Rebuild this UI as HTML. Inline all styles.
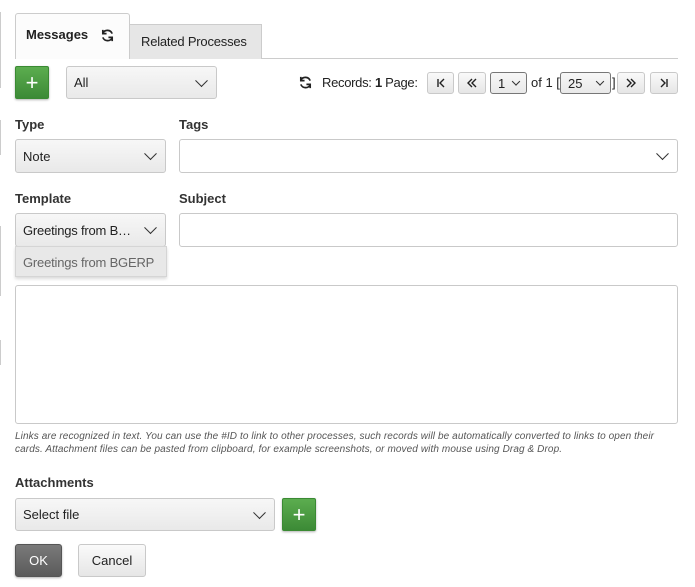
<!DOCTYPE html>
<html><head><style>
*{box-sizing:border-box}
body{margin:0;width:695px;height:587px;background:#fff;font-family:"Liberation Sans",Arial,sans-serif;font-size:13px;color:#222;position:relative;overflow:hidden}
.a{position:absolute;white-space:nowrap}
.sel{position:absolute;border:1px solid #c9c9c9;border-radius:3px;background:linear-gradient(#f7f7f7,#e9e9e9);padding-left:7px;display:flex;align-items:center;font-size:13px;white-space:nowrap}
.chev{position:absolute;right:10px;top:50%;width:9px;height:9px;border-right:1.5px solid #333;border-bottom:1.5px solid #333;transform:translateY(-75%) rotate(45deg)}
.inp{position:absolute;border:1px solid #c9c9c9;border-radius:3px;background:#fff}
.lbl{position:absolute;font-weight:bold;font-size:13px;color:#333}
.btn{position:absolute;border:1px solid #c9c9c9;border-radius:3px;background:linear-gradient(#fafafa,#e6e6e6);display:flex;align-items:center;justify-content:center;font-size:12px}
.plus{position:absolute;background:linear-gradient(#5cad4f,#3c8a36);border:1px solid #3a8a33;border-radius:2px;color:#fff;font-size:22px;display:flex;align-items:center;justify-content:center;box-shadow:0 1px 2px rgba(0,0,0,.3)}
</style></head><body>
<div class="a" style="left:0;top:12px;width:1px;height:76px;background:#ccc"></div>
<div class="a" style="left:0;top:120px;width:1px;height:35px;background:#ccc"></div>
<div class="a" style="left:0;top:226px;width:1px;height:70px;background:#ccc"></div>
<div class="a" style="left:0;top:340px;width:1px;height:25px;background:#ccc"></div>
<div class="a" style="left:15px;top:58px;width:663px;height:1px;background:#ccc"></div>
<div class="a" style="left:15px;top:13px;width:115px;height:46px;border:1px solid #ccc;border-bottom:none;border-radius:3px 3px 0 0;background:#fcfcfc"></div>
<div class="a" style="left:26px;top:27px;font-weight:bold;font-size:13px">Messages</div>
<svg class="a" style="left:100px;top:28px" width="15" height="15" viewBox="0 0 16 16" fill="none" stroke="#222" stroke-width="1.8"><path d="M13 6A5.5 5.5 0 0 0 3 5.5M3 10a5.5 5.5 0 0 0 10 .5"/><path d="M3 2v4h4M13 14v-4H9" /></svg>
<div class="a" style="left:129px;top:24px;width:133px;height:35px;border:1px solid #ccc;border-bottom:none;background:#e6e6e6"></div>
<div class="a" style="left:141px;top:34px;font-size:13px;letter-spacing:-0.2px">Related Processes</div>
<div class="plus" style="left:15px;top:66px;width:34px;height:33px">+</div>
<div class="sel" style="left:66px;top:66px;width:151px;height:33px">All<span class="chev"></span></div>
<svg class="a" style="left:298px;top:75px" width="15" height="15" viewBox="0 0 16 16" fill="none" stroke="#222" stroke-width="1.8"><path d="M13 6A5.5 5.5 0 0 0 3 5.5M3 10a5.5 5.5 0 0 0 10 .5"/><path d="M3 2v4h4M13 14v-4H9"/></svg>
<div class="a" style="left:322px;top:75px;font-size:13px;letter-spacing:-0.3px">Records: <b>1</b> Page:</div>
<div class="btn" style="left:427px;top:72px;width:27px;height:22px"><svg width="10" height="10" viewBox="0 0 10 10" fill="none" stroke="#222" stroke-width="1.4"><path d="M2 1v8M8 1L4 5l4 4"/></svg></div>
<div class="btn" style="left:458px;top:72px;width:28px;height:22px"><svg width="10" height="10" viewBox="0 0 10 10" fill="none" stroke="#222" stroke-width="1.4"><path d="M5 1L1 5l4 4M9 1L5 5l4 4"/></svg></div>
<div class="sel" style="left:490px;top:72px;width:37px;height:22px;border-color:#777">1<span class="chev" style="right:7px;width:6px;height:6px"></span></div>
<div class="a" style="left:531px;top:75px">of 1 [</div>
<div class="sel" style="left:560px;top:72px;width:51px;height:22px;border-color:#777">25<span class="chev" style="right:7px;width:6px;height:6px"></span></div>
<div class="a" style="left:612px;top:75px">]</div>
<div class="btn" style="left:617px;top:72px;width:28px;height:22px"><svg width="10" height="10" viewBox="0 0 10 10" fill="none" stroke="#222" stroke-width="1.4"><path d="M1 1l4 4-4 4M5 1l4 4-4 4"/></svg></div>
<div class="btn" style="left:650px;top:72px;width:28px;height:22px"><svg width="10" height="10" viewBox="0 0 10 10" fill="none" stroke="#222" stroke-width="1.4"><path d="M2 1l4 4-4 4M8 1v8"/></svg></div>
<div class="lbl" style="left:15px;top:117px">Type</div>
<div class="lbl" style="left:179px;top:117px">Tags</div>
<div class="sel" style="left:15px;top:139px;width:151px;height:34px">Note<span class="chev"></span></div>
<div class="inp" style="left:179px;top:139px;width:499px;height:34px"><span class="chev"></span></div>
<div class="lbl" style="left:15px;top:191px">Template</div>
<div class="lbl" style="left:179px;top:191px">Subject</div>
<div class="sel" style="left:15px;top:213px;width:151px;height:34px;letter-spacing:-0.2px">Greetings from B…<span class="chev"></span></div>
<div class="inp" style="left:179px;top:213px;width:499px;height:34px"></div>
<div class="inp" style="left:15px;top:285px;width:663px;height:139px"></div>
<div class="a" style="left:15px;top:246px;width:152px;height:31px;background:#e8e8e8;border:1px solid #d5d5d5;box-shadow:0 2px 3px rgba(0,0,0,.15);color:#666;padding:8px 0 0 7px;font-size:13px;letter-spacing:-0.2px">Greetings from BGERP</div>
<div class="a" style="left:15px;top:430px;width:665px;font-size:10px;font-style:italic;color:#555;line-height:13px;white-space:normal;letter-spacing:0.1px">Links are recognized in text. You can use the #ID to link to other processes, such records will be automatically converted to links to open their<br>cards. Attachment files can be pasted from clipboard, for example screenshots, or moved with mouse using Drag &amp; Drop.</div>
<div class="lbl" style="left:15px;top:475px">Attachments</div>
<div class="sel" style="left:15px;top:498px;width:260px;height:33px">Select file<span class="chev"></span></div>
<div class="plus" style="left:282px;top:498px;width:34px;height:33px">+</div>
<div class="btn" style="left:15px;top:544px;width:47px;height:33px;background:linear-gradient(#7a7a7a,#5a5a5a);border-color:#555;color:#fff;font-size:13px;box-shadow:0 1px 2px rgba(0,0,0,.3)">OK</div>
<div class="btn" style="left:78px;top:544px;width:68px;height:33px;font-size:13px">Cancel</div>
</body></html>
